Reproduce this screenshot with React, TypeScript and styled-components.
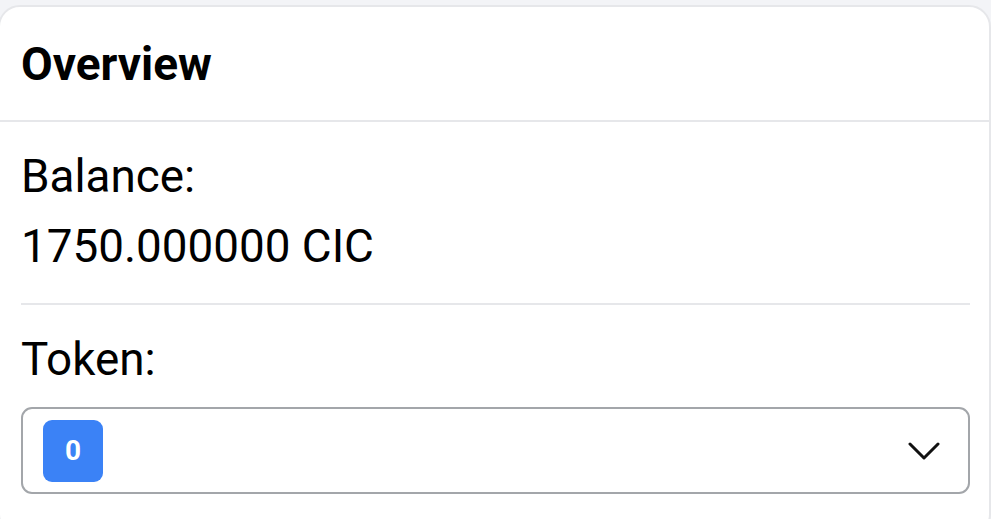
import React from "react";
import styled, { createGlobalStyle } from "styled-components";

const GlobalStyle = createGlobalStyle`
  html, body {
    margin: 0;
    padding: 0;
    background: #f3f4f7;
    overflow: hidden;
  }
  body {
    font-family: Roboto, "Liberation Sans", Arial, sans-serif;
    color: #000;
  }
  * { box-sizing: border-box; }
`;

const Page = styled.div`
  padding-top: 5px;
  width: 991px;
  height: 519px;
  overflow: hidden;
`;

const Card = styled.section`
  background: #fff;
  border: 2px solid #e6e7ea;
  border-radius: 22px;
  width: 993px;
  margin-left: -2px;
  overflow: hidden;
`;

const CardHeader = styled.header`
  height: 115px;
  display: flex;
  align-items: center;
  padding: 0 21px;
  border-bottom: 2px solid #e6e7ea;
`;

const Title = styled.h2`
  margin: 0;
  font-size: 46px;
  font-weight: 700;
  line-height: 1;
  color: #000;
`;

const CardBody = styled.div`
  padding: 20px 19px 40px 21px;
  display: flex;
  flex-direction: column;
`;

const Text = styled.div`
  font-size: 45.8px;
  line-height: 70px;
  color: #000;
`;

const Divider = styled.hr`
  border: none;
  border-top: 2px solid #e6e7ea;
  margin: 21px 0 20px 0;
`;

const Select = styled.div`
  margin-top: 12px;
  height: 87px;
  border: 2px solid #a3a6aa;
  border-radius: 11px;
  display: flex;
  align-items: center;
  justify-content: space-between;
  padding: 0 28px 0 20px;
`;

const Badge = styled.span`
  width: 60px;
  height: 62px;
  border-radius: 9px;
  background: #3b82f6;
  color: #fff;
  font-weight: 700;
  font-size: 28px;
  display: flex;
  align-items: center;
  justify-content: center;
`;

const Chevron = () => (
  <svg width="32" height="18" viewBox="0 0 32 18" fill="none">
    <path d="M2 2 L16 16 L30 2" stroke="#111" strokeWidth="3" strokeLinecap="round" strokeLinejoin="round" />
  </svg>
);

export default function App() {
  return (
    <>
      <GlobalStyle />
      <Page>
        <Card>
          <CardHeader>
            <Title>Overview</Title>
          </CardHeader>
          <CardBody>
            <Text>Balance:</Text>
            <Text>1750.000000 CIC</Text>
            <Divider />
            <Text>Token:</Text>
            <Select>
              <Badge>0</Badge>
              <Chevron />
            </Select>
          </CardBody>
        </Card>
      </Page>
    </>
  );
}
